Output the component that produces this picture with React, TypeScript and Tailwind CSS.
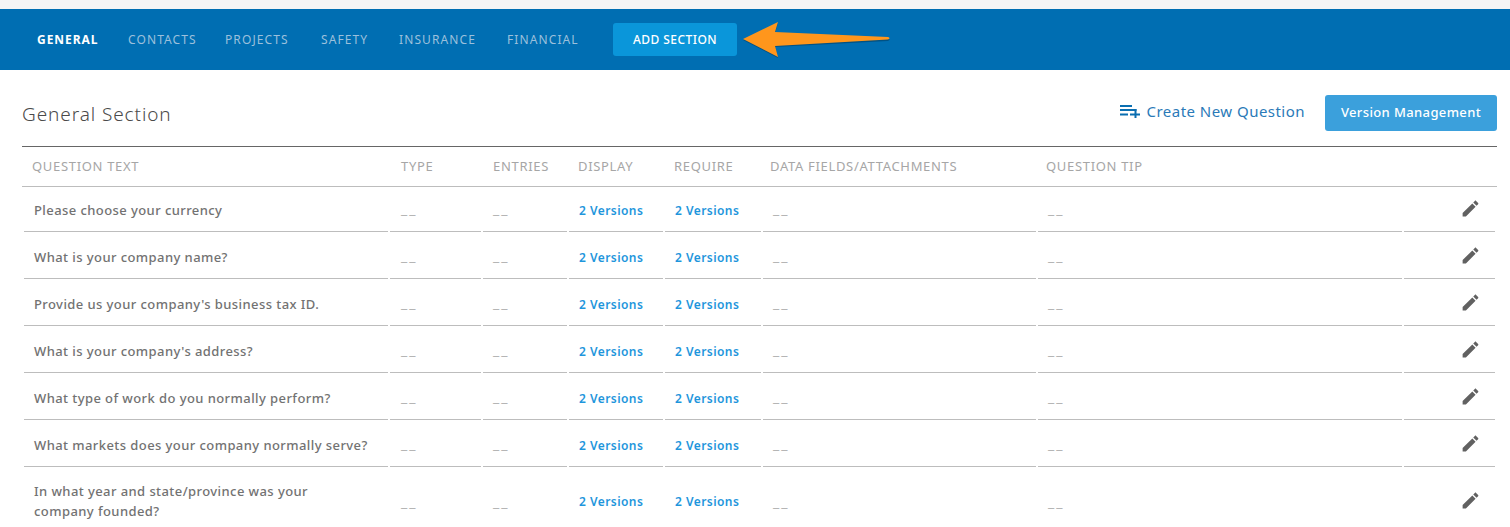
const tabs = ["CONTACTS", "PROJECTS", "SAFETY", "INSURANCE", "FINANCIAL"];

const columns = ["QUESTION TEXT", "TYPE", "ENTRIES", "DISPLAY", "REQUIRE", "DATA FIELDS/ATTACHMENTS", "QUESTION TIP"];

const questions = [
  "Please choose your currency",
  "What is your company name?",
  "Provide us your company's business tax ID.",
  "What is your company's address?",
  "What type of work do you normally perform?",
  "What markets does your company normally serve?",
];

const gridCols = "grid grid-cols-[364px_91px_84px_94px_96px_273px_364px_91px] gap-x-[2px]";

function Dash({ pad }: { pad: string }) {
  return (
    <div className={`flex items-center border-b border-[#bdbdbd] ${pad}`}>
      <span className="text-[14px] leading-4 tracking-[2px] text-[#b5b5b5]">__</span>
    </div>
  );
}

function Versions({ tall }: { tall?: boolean }) {
  return (
    <div className={`flex items-center border-b border-[#bdbdbd] pl-[10px] ${tall ? "" : "pt-[4px]"}`}>
      <span className="text-[12px] font-semibold tracking-[0.45px] text-[#1e96dc]">2 Versions</span>
    </div>
  );
}

function EditIcon() {
  return (
    <div className="flex items-center border-b border-[#bdbdbd] pb-[2px] pl-[56px]">
      <svg viewBox="0 0 24 24" className="h-[21px] w-[21px] fill-[#616161]">
        <path d="M3 17.25V21h3.75L17.81 9.94l-3.75-3.75L3 17.25zM20.71 7.04c.39-.39.39-1.02 0-1.41l-2.34-2.34c-.39-.39-1.02-.39-1.41 0l-1.83 1.83 3.75 3.75 1.83-1.83z" />
      </svg>
    </div>
  );
}

function Row({ text, tall }: { text: string; tall?: boolean }) {
  return (
    <div className={`${gridCols} ${tall ? "h-[66px]" : "h-[45px]"}`}>
      <div className={`flex items-center border-b border-[#bdbdbd] pl-[10px] ${tall ? "pb-[2px]" : "pt-[2px]"}`}>
        <span className={`text-[13px] font-medium leading-[20px] tracking-[0.42px] text-[#727272] ${tall ? "w-[300px]" : ""}`}>
          {text}
        </span>
      </div>
      <Dash pad="pl-[11px]" />
      <Dash pad="pl-[10px]" />
      <Versions tall={tall} />
      <Versions tall={tall} />
      <Dash pad="pl-[10px]" />
      <Dash pad="pl-[10px]" />
      <EditIcon />
    </div>
  );
}

export default function App() {
  return (
    <div className="relative h-[527px] w-[1510px] overflow-hidden bg-white font-['Noto_Sans',sans-serif]">
      <div className="h-[9px] bg-[#f5f5f5]" />

      {/* Tabs */}
      <div className="flex h-[61px] items-center bg-[#006eb2] pl-[37px]">
        <div className="grid grid-cols-[91px_97px_96px_78px_108px_106px] items-center">
          <span className="text-[12px] font-bold tracking-[0.95px] text-white">GENERAL</span>
          {tabs.map((tab) => (
            <span key={tab} className="text-[12px] tracking-[1.1px] text-[#9cc0dc]">
              {tab}
            </span>
          ))}
        </div>
        <button className="h-[33px] w-[124px] rounded-[3px] bg-[#0a96da] text-[12px] font-medium tracking-[0.45px] text-white">
          ADD SECTION
        </button>
      </div>

      {/* Annotation arrow */}
      <svg className="absolute left-[735px] top-[15px] h-[50px] w-[165px]" viewBox="735 15 165 50">
        <path d="M743 39 L778 22 L775 32 L888 37 Q891 38.500 888 40 L775 46 L778 57 Z" fill="#000" opacity="0.25" transform="translate(0 1)" />
        <path d="M743 39 L778 22 L775 32 L888 37 Q891 38 888 39.500 L775 46 L778 57 Z" fill="#ff961c" />
      </svg>

      {/* Section header */}
      <div className="flex h-[76px] items-center pl-[22px] pr-[13px]">
        <h1 className="mt-[12px] text-[19px] font-light tracking-[0.9px] text-[#4a4a4a]">General Section</h1>
        <div className="ml-auto mt-[10px] flex items-center">
          <svg viewBox="0 0 21 14" className="mb-[3px] h-[14px] w-[21px] fill-[#0b6fb1]">
            <rect x="0" y="0" width="12" height="2" />
            <rect x="0" y="4" width="16.500" height="2" />
            <rect x="0" y="8.500" width="8" height="2" />
            <rect x="10" y="8.500" width="10" height="2" />
            <rect x="14.500" y="4" width="2" height="9" />
          </svg>
          <span className="ml-[6px] mb-[4px] text-[15px] tracking-[0.47px] text-[#2a7ab8]">Create New Question</span>
          <button className="ml-[20px] h-[36px] w-[172px] rounded-[3px] bg-[#3ba0dc] text-[13px] font-medium tracking-[0.38px] text-white">
            Version Management
          </button>
        </div>
      </div>

      {/* Table */}
      <div className="mx-[22px] w-[1475px]">
        <div className="h-[41px] border-y border-t-[#666666] border-b-[#bdbdbd] px-[2px]">
          <div className={`${gridCols} h-full items-center text-[13px] tracking-[0.68px] text-[#a6a6a6]`}>
            {columns.map((col, i) => (
              <span key={col} className={i === 1 ? "pl-[11px]" : i === 0 || i === 6 ? "pl-[8px]" : i === 2 ? "pl-[10px]" : i === 5 ? "pl-[7px]" : "pl-[9px]"}>
                {col}
              </span>
            ))}
          </div>
        </div>
        <div className="flex flex-col gap-y-[2px] px-[2px]">
          {questions.map((q) => (
            <Row key={q} text={q} />
          ))}
          <Row text="In what year and state/province was your company founded?" tall />
        </div>
      </div>
    </div>
  );
}
